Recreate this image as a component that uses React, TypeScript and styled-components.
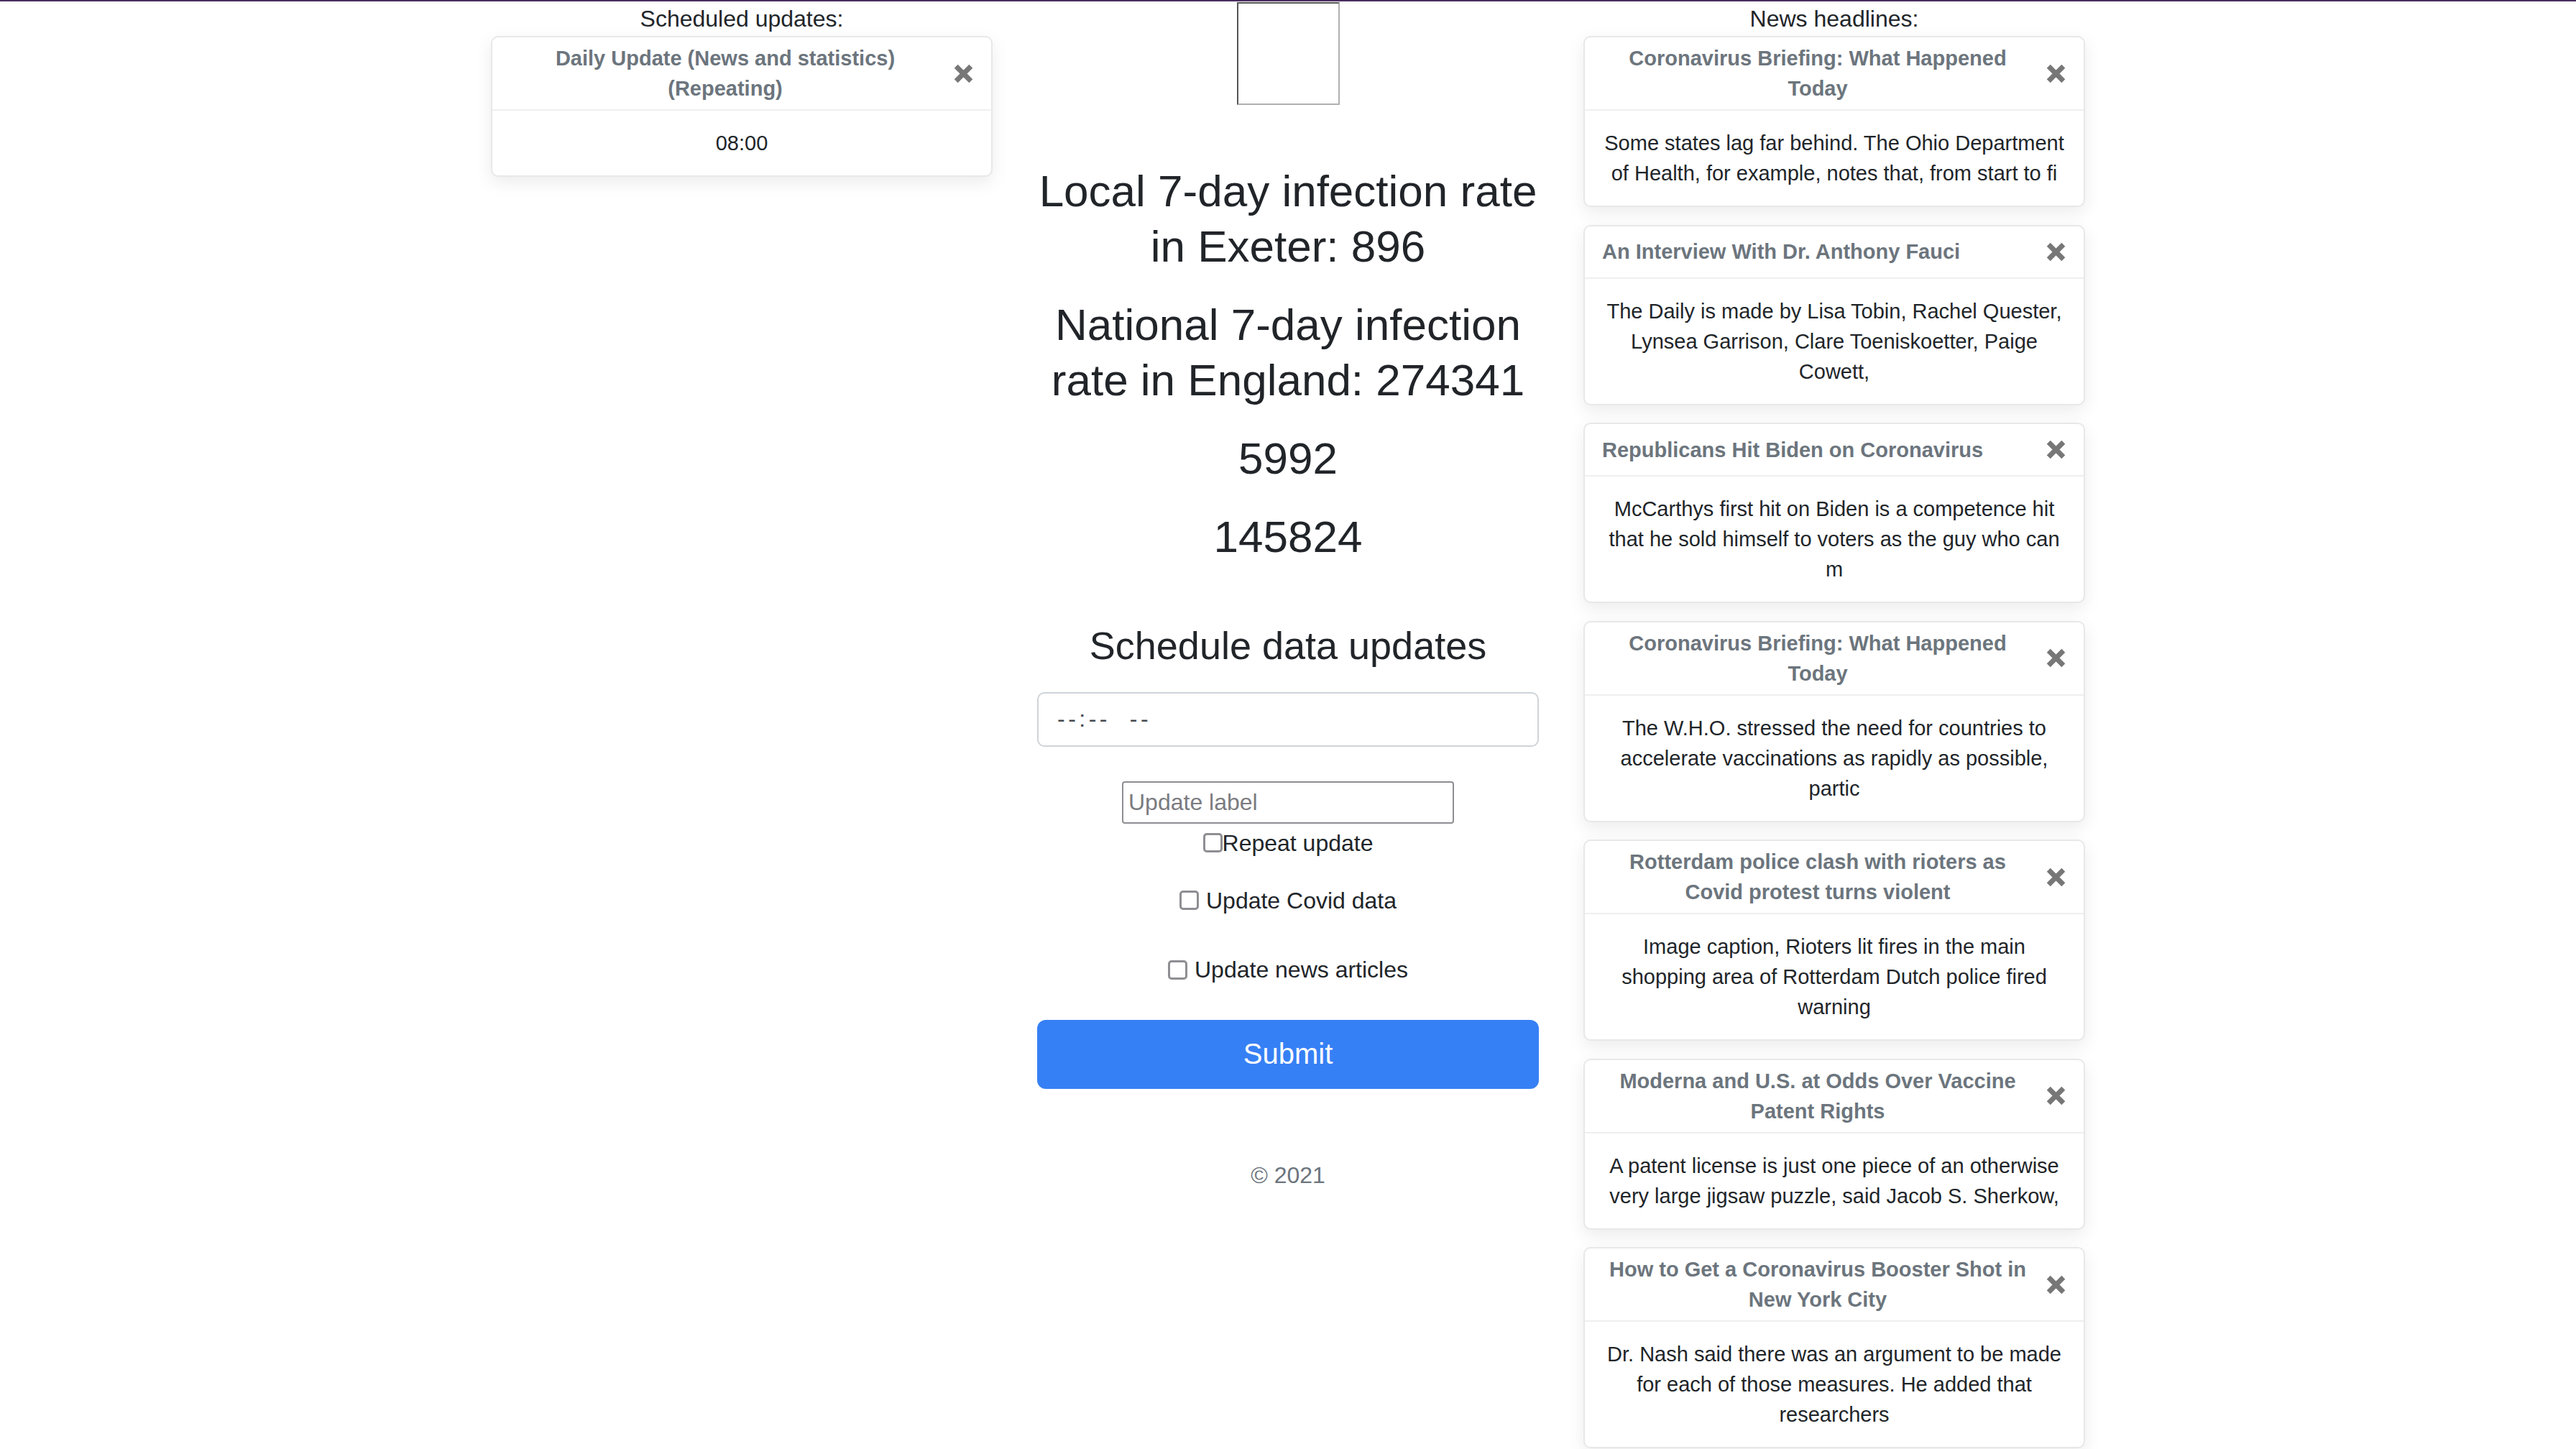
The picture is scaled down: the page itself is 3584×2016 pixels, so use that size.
import React from "react";
import styled, { createGlobalStyle } from "styled-components";

const GlobalStyle = createGlobalStyle`
  html, body {
    margin: 0;
    padding: 0;
    background: #ffffff;
  }
  body {
    font-family: "Liberation Sans", Arial, sans-serif;
    color: #212529;
  }
  * { box-sizing: border-box; }
`;

const TopBar = styled.div`
  height: 2px;
  background: #4b2e5f;
`;

const Layout = styled.main`
  display: grid;
  grid-template-columns: repeat(3, 698px);
  column-gap: 62px;
  justify-content: center;
  align-items: start;
`;

const SideColumn = styled.section`
  display: flex;
  flex-direction: column;
`;

const ColumnTitle = styled.h4`
  margin: 0;
  font-size: 32px;
  line-height: 48px;
  font-weight: 400;
  text-align: center;
  color: #212529;
`;

const Card = styled.article`
  background: #ffffff;
  border: 2px solid #e8e8e8;
  border-radius: 10px;
  box-shadow: 0 8px 24px rgba(0, 0, 0, 0.08);
  margin-bottom: 24.5px;
  overflow: hidden;
`;

const CardHeader = styled.header`
  display: flex;
  justify-content: space-between;
  align-items: center;
  gap: 16px;
  padding: 8px 24px;
  border-bottom: 2px solid #efefef;
`;

const CardTitle = styled.h5`
  margin: 0;
  font-size: 29px;
  line-height: 42px;
  font-weight: 700;
  color: #6c757d;
  text-align: center;
`;

const CloseButton = styled.button`
  flex: none;
  width: 30px;
  height: 55px;
  padding: 0;
  border: 0;
  background: transparent;
  display: flex;
  align-items: center;
  justify-content: center;
  color: #777777;
  cursor: pointer;
`;

const CardBody = styled.div`
  padding: 24px 22px;
  font-size: 29px;
  line-height: 42px;
  text-align: center;
  color: #212529;
`;

const MainColumn = styled.section`
  display: flex;
  flex-direction: column;
`;

const Frame = styled.div`
  align-self: center;
  width: 143px;
  height: 143px;
  margin-top: 1px;
  border: 2px solid;
  border-color: #555555 #b0b0b0 #b0b0b0 #555555;
  background: #ffffff;
`;

const Stats = styled.div`
  margin-top: 81px;
  display: flex;
  flex-direction: column;
  gap: 32px;
`;

const StatHeading = styled.h2`
  margin: 0;
  font-size: 62px;
  line-height: 77px;
  font-weight: 400;
  text-align: center;
  color: #212529;
`;

const SectionTitle = styled.h3`
  margin: 80px 0 0;
  font-size: 54px;
  line-height: 67px;
  font-weight: 400;
  text-align: center;
  color: #212529;
`;

const Form = styled.form`
  display: flex;
  flex-direction: column;
`;

const TimeField = styled.input`
  margin-top: 30.5px;
  width: 100%;
  height: 76px;
  padding: 0 26px;
  border: 2px solid #ced4da;
  border-radius: 10px;
  font-family: inherit;
  font-size: 32px;
  letter-spacing: 4.5px;
  color: #212529;
  background: #ffffff;
  outline: none;
  &::placeholder {
    color: #44494f;
    opacity: 1;
  }
`;

const LabelField = styled.input`
  align-self: center;
  margin-top: 48px;
  width: 462px;
  height: 59px;
  padding: 0 7px;
  border: 2px solid #8e8e93;
  border-radius: 4px;
  font-family: inherit;
  font-size: 32px;
  color: #212529;
  background: #ffffff;
  outline: none;
  &::placeholder {
    color: #7b7b80;
    opacity: 1;
  }
`;

const CheckRow = styled.label<{ $gap: number; $top: number }>`
  display: flex;
  justify-content: center;
  align-items: center;
  gap: ${(p) => p.$gap}px;
  margin-top: ${(p) => p.$top}px;
  font-size: 32px;
  line-height: 48px;
  color: #212529;
`;

const Checkbox = styled.input`
  appearance: none;
  -webkit-appearance: none;
  flex: none;
  width: 27px;
  height: 27px;
  margin: 0;
  border: 3px solid #8e8e93;
  border-radius: 5px;
  background: #ffffff;
`;

const SubmitButton = styled.button`
  margin-top: 45.5px;
  width: 100%;
  height: 96px;
  border: 0;
  border-radius: 12px;
  background: #3680f5;
  color: #ffffff;
  font-family: inherit;
  font-size: 40px;
  cursor: pointer;
`;

const Footer = styled.footer`
  margin-top: 96px;
  font-size: 32px;
  line-height: 48px;
  text-align: center;
  color: #6c757d;
`;

const CloseIcon = () => (
  <svg width="27" height="27" viewBox="0 0 27 27" aria-hidden="true">
    <g stroke="currentColor" strokeWidth="7" strokeLinecap="butt">
      <line x1="3.2" y1="3.2" x2="23.8" y2="23.8" />
      <line x1="23.8" y1="3.2" x2="3.2" y2="23.8" />
    </g>
  </svg>
);

type Item = { title: string; text: string };

const scheduled: Item[] = [
  { title: "Daily Update (News and statistics) (Repeating)", text: "08:00" },
];

const news: Item[] = [
  {
    title: "Coronavirus Briefing: What Happened Today",
    text: "Some states lag far behind. The Ohio Department of Health, for example, notes that, from start to fi",
  },
  {
    title: "An Interview With Dr. Anthony Fauci",
    text: "The Daily is made by Lisa Tobin, Rachel Quester, Lynsea Garrison, Clare Toeniskoetter, Paige Cowett,",
  },
  {
    title: "Republicans Hit Biden on Coronavirus",
    text: "McCarthys first hit on Biden is a competence hit that he sold himself to voters as the guy who can m",
  },
  {
    title: "Coronavirus Briefing: What Happened Today",
    text: "The W.H.O. stressed the need for countries to accelerate vaccinations as rapidly as possible, partic",
  },
  {
    title: "Rotterdam police clash with rioters as Covid protest turns violent",
    text: "Image caption, Rioters lit fires in the main shopping area of Rotterdam Dutch police fired warning",
  },
  {
    title: "Moderna and U.S. at Odds Over Vaccine Patent Rights",
    text: "A patent license is just one piece of an otherwise very large jigsaw puzzle, said Jacob S. Sherkow,",
  },
  {
    title: "How to Get a Coronavirus Booster Shot in New York City",
    text: "Dr. Nash said there was an argument to be made for each of those measures. He added that researchers",
  },
];

const InfoCard = ({ item }: { item: Item }) => (
  <Card>
    <CardHeader>
      <CardTitle>{item.title}</CardTitle>
      <CloseButton type="button" aria-label="Remove">
        <CloseIcon />
      </CloseButton>
    </CardHeader>
    <CardBody>{item.text}</CardBody>
  </Card>
);

export default function App() {
  return (
    <>
      <GlobalStyle />
      <TopBar />
      <Layout>
        <SideColumn>
          <ColumnTitle>Scheduled updates:</ColumnTitle>
          {scheduled.map((s, i) => (
            <InfoCard key={i} item={s} />
          ))}
        </SideColumn>

        <MainColumn>
          <Frame />
          <Stats>
            <StatHeading>Local 7-day infection rate in Exeter: 896</StatHeading>
            <StatHeading>National 7-day infection rate in England: 274341</StatHeading>
            <StatHeading>5992</StatHeading>
            <StatHeading>145824</StatHeading>
          </Stats>
          <SectionTitle>Schedule data updates</SectionTitle>
          <Form onSubmit={(e) => e.preventDefault()}>
            <TimeField type="text" placeholder="--:--  --" aria-label="Update time" />
            <LabelField type="text" placeholder="Update label" />
            <CheckRow $gap={0} $top={3}>
              <Checkbox type="checkbox" />
              Repeat update
            </CheckRow>
            <CheckRow $gap={10} $top={32}>
              <Checkbox type="checkbox" />
              Update Covid data
            </CheckRow>
            <CheckRow $gap={10} $top={48.5}>
              <Checkbox type="checkbox" />
              Update news articles
            </CheckRow>
            <SubmitButton type="submit">Submit</SubmitButton>
          </Form>
          <Footer>© 2021</Footer>
        </MainColumn>

        <SideColumn>
          <ColumnTitle>News headlines:</ColumnTitle>
          {news.map((n, i) => (
            <InfoCard key={i} item={n} />
          ))}
        </SideColumn>
      </Layout>
    </>
  );
}
